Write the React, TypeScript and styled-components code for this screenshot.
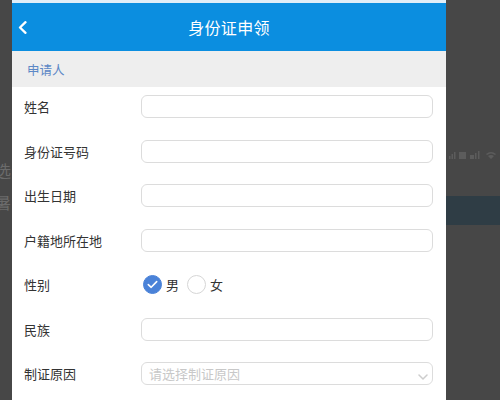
import styled, { createGlobalStyle } from "styled-components";

const GlobalStyle = createGlobalStyle`
    html, body {
        margin: 0;
        padding: 0;
        background: #474747;
    }
    body {
        font-family: "Noto Sans CJK SC", "Noto Sans", sans-serif;
    }
`;

const fields = [
    { label: "姓名", kind: "input" },
    { label: "身份证号码", kind: "input" },
    { label: "出生日期", kind: "input" },
    { label: "户籍地所在地", kind: "input" },
    { label: "性别", kind: "radio" },
    { label: "民族", kind: "input" },
    { label: "制证原因", kind: "select" },
];

const BackIcon = () => (
    <svg width="9" height="13" viewBox="0 0 9 13">
        <path d="M7.5 1.2 L2 6.5 L7.5 11.8" fill="none" stroke="#fff" strokeWidth="2.3" strokeLinecap="round" strokeLinejoin="round" />
    </svg>
);

const CheckIcon = () => (
    <svg width="11" height="9" viewBox="0 0 11 9">
        <path d="M1.3 4.6 L4.2 7.3 L9.7 1.6" fill="none" stroke="#fff" strokeWidth="1.6" strokeLinecap="round" strokeLinejoin="round" />
    </svg>
);

const ChevronDown = () => (
    <svg width="10" height="6" viewBox="0 0 10 6">
        <path d="M1 1 L5 5 L9 1" fill="none" stroke="#cdcdcd" strokeWidth="1.5" strokeLinecap="round" strokeLinejoin="round" />
    </svg>
);

const StatusIcons = () => (
    <svg width="50" height="10" viewBox="0 0 50 10">
        <g fill="#5c5c5c">
            <rect x="1" y="6" width="1.5" height="3" />
            <rect x="3.5" y="4" width="1.5" height="5" />
            <rect x="6" y="2" width="1.5" height="7" />
            <rect x="11" y="2" width="7" height="7" />
            <rect x="22" y="5" width="4" height="4" />
            <rect x="27" y="3" width="1.5" height="6" />
            <rect x="30" y="1" width="1.5" height="8" />
            <path d="M38 4 Q43 0 48 4 L47 5 Q43 2 39 5 Z M40 6 Q43 4 46 6 L43 9 Z" />
        </g>
    </svg>
);

const App = () => {
    return (
        <>
            <GlobalStyle />
            <Screen>
                <LeftGutter>
                    <GhostGlyph>选</GhostGlyph>
                    <GhostGlyph>暑</GhostGlyph>
                </LeftGutter>

                <Panel>
                    <Header>
                        <BackButton>
                            <BackIcon />
                        </BackButton>
                        <Title>身份证申领</Title>
                        <span />
                    </Header>

                    <SectionTitle>申请人</SectionTitle>

                    <Form>
                        {fields.map((f) => (
                            <Row key={f.label}>
                                <Label>{f.label}</Label>
                                {f.kind === "input" && <TextBox />}
                                {f.kind === "radio" && (
                                    <RadioGroup>
                                        <RadioOption>
                                            <RadioCircle $checked>
                                                <CheckIcon />
                                            </RadioCircle>
                                            男
                                        </RadioOption>
                                        <RadioOption>
                                            <RadioCircle />
                                            女
                                        </RadioOption>
                                    </RadioGroup>
                                )}
                                {f.kind === "select" && (
                                    <SelectBox>
                                        <Placeholder>请选择制证原因</Placeholder>
                                        <Caret>
                                            <ChevronDown />
                                        </Caret>
                                    </SelectBox>
                                )}
                            </Row>
                        ))}
                    </Form>
                </Panel>

                <RightGutter>
                    <StatusIcons />
                    <DimBar />
                </RightGutter>
            </Screen>
        </>
    );
};

const Screen = styled.div`
    width: 500px;
    height: 400px;
    display: flex;
    overflow: hidden;
    background: #474747;
`;

const LeftGutter = styled.div`
    width: 12px;
    flex-shrink: 0;
    display: flex;
    flex-direction: column;
    gap: 14px;
    padding-top: 161px;
    overflow: hidden;
`;

const GhostGlyph = styled.div`
    margin-left: -5px;
    font-size: 16px;
    line-height: 18px;
    color: #6b6b6b;
`;

const Panel = styled.div`
    width: 434px;
    flex-shrink: 0;
    background: #fff;
    border-top: 3px solid #e1eef8;
    display: flex;
    flex-direction: column;
`;

const Header = styled.div`
    height: 48px;
    background: #0b8ee0;
    display: grid;
    grid-template-columns: 40px 1fr 40px;
    align-items: center;
`;

const BackButton = styled.div`
    padding-left: 6px;
    display: flex;
    align-items: center;
    padding-top: 1px;
`;

const Title = styled.div`
    text-align: center;
    color: #fff;
    font-size: 16px;
    letter-spacing: 0.3px;
`;

const SectionTitle = styled.div`
    height: 36px;
    background: #eeeeee;
    padding-left: 15px;
    display: flex;
    align-items: center;
    font-size: 12.5px;
    color: #5c88c6;
`;

const Form = styled.div`
    display: flex;
    flex-direction: column;
    gap: 21.5px;
    padding: 8px 13px 0 12px;
`;

const Row = styled.div`
    height: 23px;
    display: flex;
    align-items: center;
`;

const Label = styled.div`
    width: 117px;
    flex-shrink: 0;
    font-size: 13px;
    color: #333;
`;

const TextBox = styled.div`
    flex: 1;
    height: 23px;
    box-sizing: border-box;
    border: 1px solid #dcdcdc;
    border-radius: 6px;
    background: #fff;
`;

const SelectBox = styled(TextBox)`
    display: flex;
    align-items: center;
    justify-content: space-between;
    padding: 0 4px 0 7px;
`;

const Placeholder = styled.span`
    font-size: 13px;
    color: #c8c8c8;
`;

const Caret = styled.span`
    display: flex;
    align-self: flex-end;
    padding-bottom: 4px;
`;

const RadioGroup = styled.div`
    display: flex;
    align-items: center;
    gap: 8px;
    padding-left: 2px;
`;

const RadioOption = styled.div`
    display: flex;
    align-items: center;
    gap: 4px;
    font-size: 13px;
    color: #333;
`;

const RadioCircle = styled.div<{ $checked?: boolean }>`
    width: 19px;
    height: 19px;
    box-sizing: border-box;
    border-radius: 50%;
    display: flex;
    align-items: center;
    justify-content: center;
    background: ${(p) => (p.$checked ? "#4a82d8" : "#fff")};
    border: 1px solid ${(p) => (p.$checked ? "#4a82d8" : "#d6d6d6")};
`;

const RightGutter = styled.div`
    flex: 1;
    display: flex;
    flex-direction: column;
    padding-top: 150px;
    gap: 36px;
    padding-left: 2px;
`;

const DimBar = styled.div`
    margin-left: -2px;
    height: 29px;
    background: #2f3d45;
`;

export default App;
